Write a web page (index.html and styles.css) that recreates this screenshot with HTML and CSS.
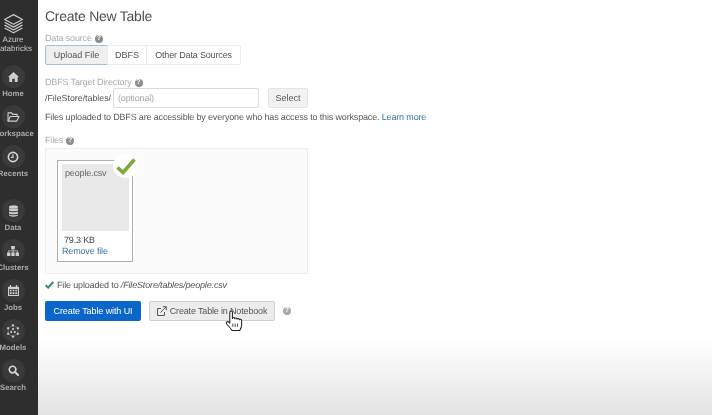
FILE: index.html
```html
<!DOCTYPE html>
<html lang="en">
<head>
<meta charset="utf-8">
<title>Create New Table</title>
<link rel="stylesheet" href="styles.css">
</head>
<body>
<div class="app">
  <nav class="sidebar">
    <div class="logo">
      <svg class="logo-icon" width="21" height="21" viewBox="0 0 26 25" fill="none" stroke="#c9c9c9" stroke-width="1.6" stroke-linejoin="round">
        <path d="M13 1.5 24 7.5 13 13.5 2 7.5Z"/>
        <path d="M2 11 13 17 24 11"/>
        <path d="M2 14.5 13 20.5 24 14.5"/>
        <path d="M2 18 13 24 24 18"/>
      </svg>
      <span>Azure</span>
      <span>Databricks</span>
    </div>
    <div class="nav-group">
      <div class="nav-item">
        <span class="nav-circle"><svg width="11" height="10" viewBox="0 0 12 11" fill="#cfcfcf"><path d="M6 0 12 5.5 10.6 5.5V11H7.4V7.4H4.6V11H1.4V5.5H0Z"/></svg></span>
        <span class="nav-label">Home</span>
      </div>
      <div class="nav-item">
        <span class="nav-circle"><svg width="13" height="10" viewBox="0 0 14 11" fill="none" stroke="#cfcfcf" stroke-width="1.2" stroke-linejoin="round"><path d="M1 10V1H5L6.2 2.6H11V5"/><path d="M1 10 3.4 5H13L10.6 10Z"/></svg></span>
        <span class="nav-label">Workspace</span>
      </div>
      <div class="nav-item">
        <span class="nav-circle"><svg width="12" height="12" viewBox="0 0 13 13" fill="none" stroke="#d4d4d4"><circle cx="6.5" cy="6.5" r="5" stroke-width="1.8"/><path d="M6.5 3.5V6.8H4.2" stroke-width="1.3"/></svg></span>
        <span class="nav-label">Recents</span>
      </div>
    </div>
    <div class="nav-group">
      <div class="nav-item">
        <span class="nav-circle"><svg width="9" height="12" viewBox="0 0 10 13" fill="#cfcfcf"><ellipse cx="5" cy="2" rx="5" ry="2"/><path d="M0 3.2C1 4.6 9 4.6 10 3.2V5.6C9 7 1 7 0 5.6Z"/><path d="M0 6.8C1 8.2 9 8.2 10 6.8V9C9 10.4 1 10.4 0 9Z"/><path d="M0 10.2C1 11.6 9 11.6 10 10.2V11C9 13.4 1 13.4 0 11Z"/></svg></span>
        <span class="nav-label">Data</span>
      </div>
      <div class="nav-item">
        <span class="nav-circle"><svg width="12" height="10" viewBox="0 0 13 11" fill="#cfcfcf"><rect x="4.5" y="0" width="4" height="3.6"/><rect x="0" y="7" width="3.6" height="4"/><rect x="4.7" y="7" width="3.6" height="4"/><rect x="9.4" y="7" width="3.6" height="4"/><path d="M6 3.6H7V5H11.7V7H10.9V5.8H7V7H6V5.8H2.1V7H1.3V5H6Z"/></svg></span>
        <span class="nav-label">Clusters</span>
      </div>
      <div class="nav-item">
        <span class="nav-circle"><svg width="11" height="11" viewBox="0 0 12 12" fill="#cfcfcf"><path d="M0 2H2V0H3.4V2H8.6V0H10V2H12V12H0Z"/><path d="M1.2 4.4H10.8V10.8H1.2Z" fill="#3a3a3a"/><path d="M2 5.2H4V6.9H2ZM5 5.2H7V6.9H5ZM8 5.2H10V6.9H8ZM2 7.9H4V9.8H2ZM5 7.9H7V9.8H5ZM8 7.9H10V9.8H8Z"/></svg></span>
        <span class="nav-label">Jobs</span>
      </div>
      <div class="nav-item">
        <span class="nav-circle"><svg width="14" height="14" viewBox="0 0 15 15" fill="#cfcfcf" stroke="#cfcfcf" stroke-width=".3"><circle cx="7.5" cy="1.5" r="1.1"/><circle cx="2.3" cy="4.5" r="1.1"/><circle cx="12.7" cy="4.5" r="1.1"/><circle cx="2.3" cy="10.5" r="1.1"/><circle cx="12.7" cy="10.5" r="1.1"/><circle cx="7.5" cy="13.5" r="1.1"/><circle cx="7.5" cy="5.4" r="1"/><circle cx="5.6" cy="8.6" r="1"/><circle cx="9.4" cy="8.6" r="1"/><path fill="none" d="M7.5 1.5 12.7 4.5V10.5L7.5 13.5 2.3 10.5V4.5Z"/></svg></span>
        <span class="nav-label">Models</span>
      </div>
      <div class="nav-item">
        <span class="nav-circle"><svg width="11" height="11" viewBox="0 0 12 12" fill="none" stroke="#d6d6d6"><circle cx="5" cy="5" r="3.6" stroke-width="1.8"/><path d="M7.8 7.8 11 11" stroke-width="2.2" stroke-linecap="round"/></svg></span>
        <span class="nav-label">Search</span>
      </div>
    </div>
  </nav>

  <main class="content">
    <h1 class="title">Create New Table</h1>

    <div class="field-label source-label">Data source <span class="help">?</span></div>
    <div class="tabs">
      <button class="tab tab-active">Upload File</button>
      <button class="tab tab-dbfs">DBFS</button>
      <button class="tab tab-other">Other Data Sources</button>
    </div>

    <div class="field-label dir-label">DBFS Target Directory <span class="help">?</span></div>
    <div class="dir-row">
      <span class="prefix">/FileStore/tables/</span>
      <span class="input">(optional)</span>
      <button class="btn-select">Select</button>
    </div>
    <p class="note">Files uploaded to DBFS are accessible by everyone who has access to this workspace. <a class="link">Learn more</a></p>

    <div class="field-label files-label">Files <span class="help">?</span></div>
    <div class="dropzone">
      <div class="file-card">
        <div class="file-thumb">people.csv</div>
        <div class="file-size">79.3 KB</div>
        <a class="link file-remove">Remove file</a>
        <span class="file-check">
          <svg width="20" height="17" viewBox="0 0 20 17" fill="none" stroke="#7cab3c" stroke-width="3.6"><path d="M1.5 9.5 7 14.5 18.5 1.5"/></svg>
        </span>
      </div>
    </div>

    <div class="status">
      <svg width="9" height="8" viewBox="0 0 9 8" fill="none" stroke="#2c9160" stroke-width="2"><path d="M.7 4.2 3.2 6.6 8.3 1"/></svg>
      <span>File uploaded to <em>/FileStore/tables/people.csv</em></span>
    </div>

    <div class="actions">
      <button class="btn-primary">Create Table with UI</button>
      <button class="btn-notebook">
        <svg width="10" height="10" viewBox="0 0 10 10" fill="none" stroke="#555" stroke-width="1"><path d="M7.5 6V9.5H.5V2.5H4"/><path d="M3.5 6.5 9 1M5.8 .7H9.3V4.2"/></svg>
        Create Table in Notebook
      </button>
      <span class="help help-action">?</span>
      <svg class="cursor" width="18" height="22" viewBox="0 0 17 21" fill="#fff" stroke="#222" stroke-width="1" stroke-linejoin="round"><path d="M4.5 12.5V2.2C4.5.6 7 .6 7 2.2V8.2C7 6.9 9.2 6.9 9.2 8.4 9.2 7.2 11.4 7.2 11.4 8.8 11.4 7.8 13.6 7.8 13.6 9.4 13.6 8.6 15.8 8.6 15.8 10.2V14C15.8 16.5 15 18 14 19.6H6.6C5.4 17.6 3.6 15.6 1.6 13.6.4 12.2 2 10.4 3.4 11.4Z"/><path d="M7.4 13V16M9.6 13V16M11.8 13V16" stroke-width=".8"/></svg>
    </div>
  </main>
</div>
</body>
</html>
```

FILE: styles.css
```css
* { box-sizing: border-box; }
html, body { margin: 0; height: 100%; }
body {
  width: 712px;
  height: 415px;
  overflow: hidden;
  font-family: "Liberation Sans", Arial, sans-serif;
  color: #555;
  text-rendering: geometricPrecision;
}
.app { display: flex; height: 415px; filter: blur(.3px); }
.sidebar {
  width: 38px;
  flex: none;
  background: #2e2e2e;
  overflow: hidden;
  padding-top: 13px;
  display: flex;
  flex-direction: column;
}
.logo, .nav-item {
  width: 26px;
  display: flex;
  flex-direction: column;
  align-items: center;
  white-space: nowrap;
  flex: none;
}
.logo {
  font-size: 8px;
  line-height: 9px;
  color: #c8c8c8;
  height: 52px;
}
.logo-icon { margin-bottom: 1px; flex: none; }
.nav-group { display: flex; flex-direction: column; }
.nav-group + .nav-group { margin-top: 14px; }
.nav-item { height: 40px; }
.nav-circle {
  width: 23px;
  height: 23px;
  border-radius: 50%;
  background: #3a3a3a;
  display: flex;
  align-items: center;
  justify-content: center;
  flex: none;
}
.nav-label {
  font-size: 7.8px;
  line-height: 10px;
  margin-top: 1px;
  font-weight: bold;
  color: #aaa;
}
.content {
  flex: 1;
  padding: 8px 0 0 7px;
  background: linear-gradient(to bottom, #fff 0, #fff 338px, #f8f8f8 358px, #eee 385px, #e3e3e3 415px);
  font-size: 9px;
  letter-spacing: -.16px;
}
.title {
  margin: 0;
  font-size: 14px;
  line-height: 17px;
  font-weight: normal;
  color: #4f4f4f;
  letter-spacing: -.25px;
}
.field-label {
  font-size: 9px;
  line-height: 11px;
  color: #aaa;
  display: flex;
  align-items: center;
  gap: 3px;
}
.source-label { margin-top: 7px; padding-top: 1px; height: 12px; }
.dir-label { margin-top: 12px; }
.files-label { margin-top: 12px; }
.help {
  width: 8px;
  height: 8px;
  border-radius: 50%;
  background: #8e8e8e;
  color: #fff;
  font-size: 7px;
  line-height: 8px;
  font-weight: bold;
  text-align: center;
  display: inline-block;
  letter-spacing: 0;
}
.tabs { display: flex; margin-top: 1px; }
.tab {
  height: 20px;
  padding: 0;
  font: 9px/18px "Liberation Sans", Arial, sans-serif;
  color: #555;
  background: #fff;
  border: 1px solid #ececec;
  margin-left: -1px;
}
.tab-active {
  width: 63px;
  margin-left: 0;
  border: 1px solid #9cc3d4;
  border-radius: 2px 0 0 2px;
  background: #efefef;
}
.tab-dbfs { width: 40px; }
.tab-other { width: 95px; border-radius: 0 2px 2px 0; letter-spacing: -.16px; }
.dir-row {
  display: flex;
  align-items: center;
}
.prefix { font-size: 8.8px; width: 68px; flex: none; color: #555; letter-spacing: 0; }
.input {
  width: 146px;
  height: 20px;
  border: 1px solid #dcdcdc;
  border-radius: 2px;
  padding-left: 4px;
  line-height: 18px;
  color: #a8a8a8;
  background: #fff;
}
.btn-select {
  margin-left: 9px;
  width: 40px;
  height: 20px;
  padding: 0;
  font: 9px "Liberation Sans", Arial, sans-serif;
  color: #555;
  background: #f2f2f2;
  border: 1px solid #e4e4e4;
  border-radius: 2px;
}
.note { margin: 3px 0 0; font-size: 9px; line-height: 12px; color: #5a5a5a; }
.link { color: #3f74a8; }
.dropzone {
  width: 263px;
  height: 126px;
  margin-top: 2px;
  background: #fbfbfb;
  border: 1px solid #eee;
  padding: 11px;
}
.file-card {
  position: relative;
  width: 76px;
  height: 102px;
  background: #fff;
  border: 1px solid #b0b0b0;
  padding: 3px 4px;
  display: flex;
  flex-direction: column;
}
.file-thumb {
  width: 67px;
  height: 67px;
  margin-bottom: 3px;
  background: #e8e8e8;
  padding: 4px 3px;
  font-size: 9px;
  line-height: 11px;
  color: #666;
  flex: none;
}
.file-size { padding-left: 2px; line-height: 12px; color: #444; }
.file-remove { line-height: 11px; }
.file-check {
  position: absolute;
  top: -7px;
  right: -6px;
  width: 25px;
  height: 24px;
  border-radius: 50%;
  background: #fff;
  display: flex;
  align-items: center;
  justify-content: center;
}
.status {
  display: flex;
  align-items: center;
  gap: 3px;
  margin-top: 5px;
  line-height: 12px;
  color: #555;
}
.actions {
  position: relative;
  display: flex;
  align-items: center;
  margin-top: 10px;
}
.btn-primary {
  width: 96px;
  height: 20px;
  padding: 0;
  font: 9px "Liberation Sans", Arial, sans-serif;
  letter-spacing: -.1px;
  color: #fff;
  background: #0a66c8;
  border: 0;
  border-radius: 2px;
}
.btn-notebook {
  margin-left: 8px;
  width: 126px;
  height: 20px;
  padding: 0;
  font: 9px "Liberation Sans", Arial, sans-serif;
  letter-spacing: -.16px;
  color: #555;
  background: #ececec;
  border: 1px solid #cfcfcf;
  border-radius: 2px;
  display: flex;
  align-items: center;
  justify-content: center;
  gap: 3px;
}
.help-action { margin-left: 8px; background: #a8a8a8; }
.cursor { position: absolute; left: 180px; top: 9px; }
```
